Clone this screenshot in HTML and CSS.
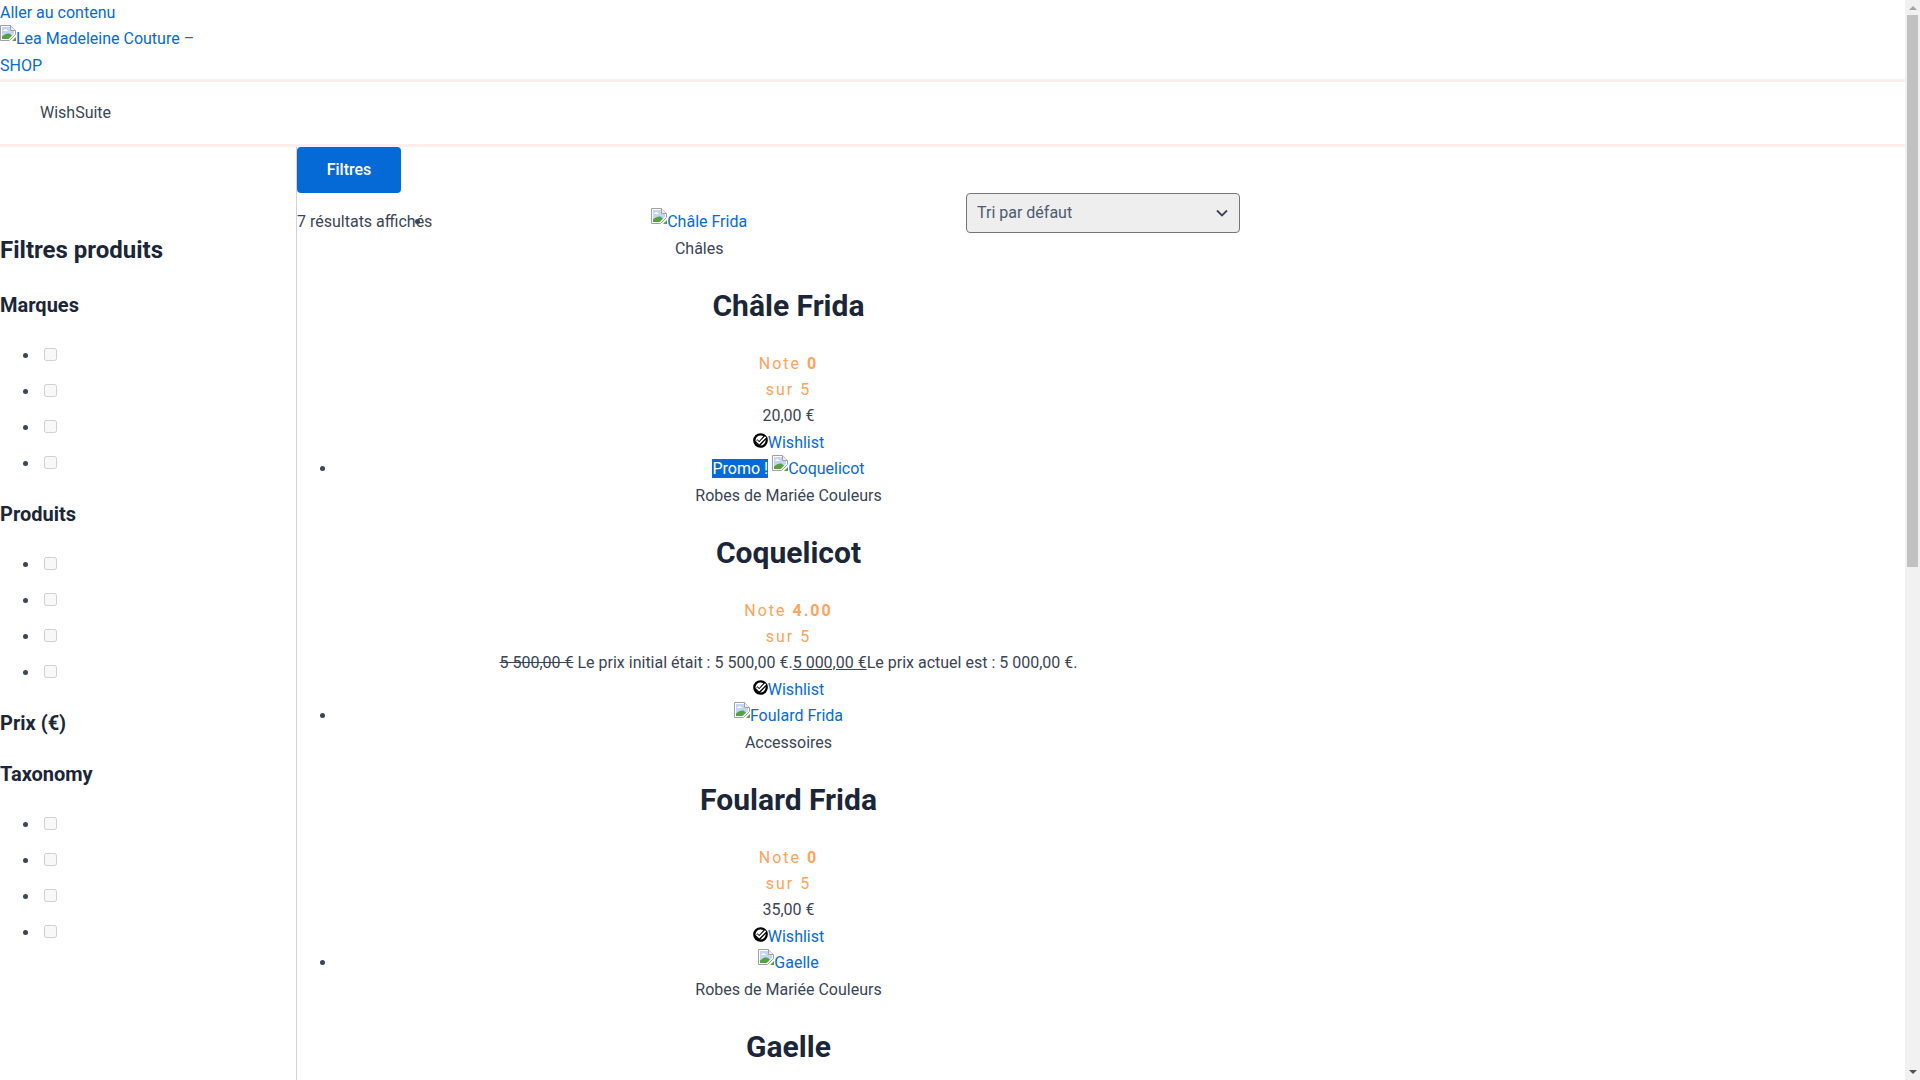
FILE: index.html
```html
<!DOCTYPE html>
<html lang="fr">
<head>
<meta charset="utf-8">
<title>Lea Madeleine Couture – SHOP</title>
<link rel="stylesheet" href="styles.css">
</head>
<body>
<svg class="defs" width="0" height="0" aria-hidden="true">
  <symbol id="broken" viewBox="0 0 16 16">
    <path d="M.5.5h10l5 5v4l-6 6H.5z" fill="#fff" stroke="#a0a0a0"/>
    <path d="M10.5.5v5h5" fill="#eee" stroke="#a0a0a0"/>
    <path d="M2 2h8v4h4v3l-5 5H2z" fill="#c3d4f5"/>
    <path d="M3 6c1-2.4 3.6-2.4 5 0z" fill="#fff"/>
    <path d="M2 14v-2.5c3-2.5 6-3.5 8-2.5l2 1.500L8.500 14z" fill="#52a33a"/>
    <path d="M12 16l4-4v4z" fill="#52a33a"/>
  </symbol>
  <symbol id="wish" viewBox="0 0 15 15">
    <circle cx="7.5" cy="7.500" r="6.2" fill="#fff" stroke="#000" stroke-width="2.300"/>
    <path d="M3 7.600l3.200 3.200L13 3.400" fill="none" stroke="#000" stroke-width="4"/>
    <path d="M3.400 7.600l2.800 2.800L12.600 3.800" fill="none" stroke="#fff" stroke-width="1.700"/>
  </symbol>
</svg>
<a class="skip" href="#contenu">Aller au contenu</a>
<header class="brand">
  <a class="logo" href="#"><svg class="broken"><use href="#broken"/></svg>Lea Madeleine Couture – SHOP</a>
</header>
<nav class="menu">WishSuite</nav>
<div class="layout" id="contenu">
  <aside class="filters">
    <h2 class="filters-title">Filtres produits</h2>
    <h3 class="filter-head">Marques</h3>
    <ul class="filter-list">
      <li><input type="checkbox" disabled></li>
      <li><input type="checkbox" disabled></li>
      <li><input type="checkbox" disabled></li>
      <li><input type="checkbox" disabled></li>
    </ul>
    <h3 class="filter-head">Produits</h3>
    <ul class="filter-list">
      <li><input type="checkbox" disabled></li>
      <li><input type="checkbox" disabled></li>
      <li><input type="checkbox" disabled></li>
      <li><input type="checkbox" disabled></li>
    </ul>
    <h3 class="filter-head">Prix (€)</h3>
    <h3 class="filter-head">Taxonomy</h3>
    <ul class="filter-list">
      <li><input type="checkbox" disabled></li>
      <li><input type="checkbox" disabled></li>
      <li><input type="checkbox" disabled></li>
      <li><input type="checkbox" disabled></li>
    </ul>
  </aside>
  <main class="shop">
    <button class="filter-btn" type="button">Filtres</button>
    <p class="count">7 résultats affichés</p>
    <form class="sort">
      <select class="sort-select"><option>Tri par défaut</option></select>
    </form>
    <ul class="products">
      <li class="product">
        <a href="#"><svg class="broken"><use href="#broken"/></svg>Châle Frida</a>
        <div>Châles</div>
        <h2 class="product-title">Châle Frida</h2>
        <div class="rating">Note <strong>0</strong><br>sur 5</div>
        <div>20,00 €</div>
        <div><svg class="wish"><use href="#wish"/></svg><a href="#">Wishlist</a></div>
      </li>
      <li class="product">
        <span class="promo">Promo !</span>
        <a href="#"><svg class="broken"><use href="#broken"/></svg>Coquelicot</a>
        <div>Robes de Mariée Couleurs</div>
        <h2 class="product-title">Coquelicot</h2>
        <div class="rating">Note <strong>4.00</strong><br>sur 5</div>
        <div><del>5 500,00 €</del> Le prix initial était : 5 500,00 €.<ins>5 000,00 €</ins>Le prix actuel est : 5 000,00 €.</div>
        <div><svg class="wish"><use href="#wish"/></svg><a href="#">Wishlist</a></div>
      </li>
      <li class="product">
        <a href="#"><svg class="broken"><use href="#broken"/></svg>Foulard Frida</a>
        <div>Accessoires</div>
        <h2 class="product-title">Foulard Frida</h2>
        <div class="rating">Note <strong>0</strong><br>sur 5</div>
        <div>35,00 €</div>
        <div><svg class="wish"><use href="#wish"/></svg><a href="#">Wishlist</a></div>
      </li>
      <li class="product">
        <a href="#"><svg class="broken"><use href="#broken"/></svg>Gaelle</a>
        <div>Robes de Mariée Couleurs</div>
        <h2 class="product-title">Gaelle</h2>
      </li>
    </ul>
  </main>
</div>
<div class="scrollbar" aria-hidden="true">
  <span class="arrow-up"></span>
  <span class="thumb"></span>
  <span class="arrow-down"></span>
</div>
</body>
</html>
```
FILE: styles.css
```css
html { background: #fff; }
body {
  margin: 0;
  font-family: Roboto, "Liberation Sans", sans-serif;
  font-size: 16px;
  line-height: 1.65;
  color: #3a4556;
}
a { color: #066ad6; text-decoration: none; }
.defs { position: absolute; }
.skip { display: block; }
.brand {
  border-bottom: 3px solid #fdeeee;
}
.logo { display: block; width: 200px; }
.broken { width: 16px; height: 16px; margin-top: -4px; vertical-align: 3px; }
.menu {
  padding: 17.7px 40px;
  border-bottom: 3px solid #fdeeee;
}
.layout {
  display: grid;
  grid-template-columns: 297px 943px;
  min-height: 1907px;
}
.filters {
  border-right: 1px solid #cfd3de;
  padding-top: 84.6px;
}
.filters-title {
  margin: 0;
  font-size: 24px;
  line-height: 36px;
  color: #1b2638;
}
.filter-head {
  margin: 23px 0 0;
  font-size: 20px;
  line-height: 28px;
  color: #1b2638;
}
.filter-list {
  margin: 24px 0 -9.8px;
  padding-left: 40px;
}
.filter-list li { height: 36px; }
.filter-list input { margin: 3px 3px 3px 4px; }
.filter-btn {
  display: block;
  width: 104px;
  height: 46px;
  padding: 0;
  border: 0;
  border-radius: 4px;
  background: #066ad6;
  color: #fff;
  font: 500 16px Roboto, sans-serif;
}
.count {
  float: left;
  margin: 16px 0;
}
.sort {
  float: right;
  margin-bottom: 20px;
}
.sort-select {
  display: block;
  width: 274px;
  height: 40px;
  padding: 0 10px;
  border: 1px solid #767676;
  border-radius: 4px;
  background: #eee url("data:image/svg+xml,%3Csvg xmlns='http://www.w3.org/2000/svg' width='12' height='8'%3E%3Cpath d='M1 1.500l5 5 5-5' fill='none' stroke='%233a4556' stroke-width='1.800'/%3E%3C/svg%3E") no-repeat right 11px center;
  color: #4b5a70;
  font: 16px Roboto, sans-serif;
  appearance: none;
}
.products {
  margin: 16.4px 0 0;
  padding-left: 40px;
  text-align: center;
}
.product-title {
  margin: 25px 0;
  font-size: 30px;
  line-height: 38.6px;
  color: #1b2638;
}
.rating {
  color: #ffa25a;
  letter-spacing: 2px;
}
.wish { width: 15px; height: 15px; vertical-align: 0; }
.promo { background: #066ad6; color: #fff; }
del, ins { color: #3a4556; }
.scrollbar {
  position: fixed;
  top: 0;
  right: 0;
  bottom: 0;
  width: 15px;
  display: flex;
  flex-direction: column;
  align-items: center;
  background: #f1f1f1;
}
.thumb {
  width: 11px;
  height: 552px;
  margin-top: 5px;
  background: #c1c1c1;
}
.arrow-up {
  margin-top: 6px;
  border: 4px solid transparent;
  border-top: 0;
  border-bottom-color: #a3a3a3;
}
.arrow-down {
  margin-top: auto;
  margin-bottom: 6px;
  border: 4px solid transparent;
  border-bottom: 0;
  border-top-color: #505050;
}
```
